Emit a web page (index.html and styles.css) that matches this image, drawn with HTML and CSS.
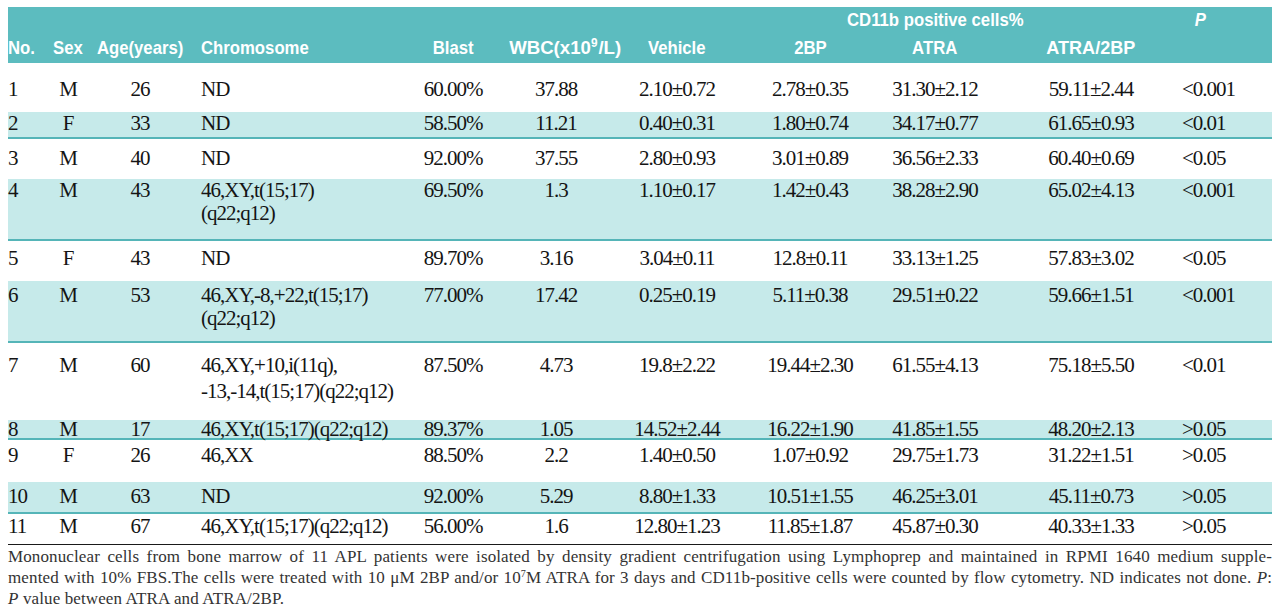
FILE: index.html
```html
<!DOCTYPE html>
<html lang="en">
<head>
<meta charset="utf-8">
<title>CD11b positive cells table</title>
<link rel="stylesheet" href="styles.css">
</head>
<body>
<div class="wrap">
<table class="data">
  <colgroup>
    <col class="w-no"><col class="w-sex"><col class="w-age"><col class="w-chr"><col class="w-blast"><col class="w-wbc"><col class="w-veh"><col class="w-bp"><col class="w-atra"><col class="w-atrabp"><col class="w-p">
  </colgroup>
  <thead>
    <tr class="hrow1">
      <th colspan="8"></th>
      <th class="c"><span class="group"><span class="hx">CD11b positive cells%</span></span></th>
      <th></th>
      <th class="c pcol"><span class="hx"><i>P</i></span></th>
    </tr>
    <tr class="hrow2">
      <th class="l"><span class="hx hl">No.</span></th>
      <th class="c"><span class="hx">Sex</span></th>
      <th class="c"><span class="hx">Age(years)</span></th>
      <th class="l chr"><span class="hx hl">Chromosome</span></th>
      <th class="c"><span class="hx">Blast</span></th>
      <th class="c"><span class="hx hx-wide">WBC(x10<sup>9</sup>/L)</span></th>
      <th class="c"><span class="hx">Vehicle</span></th>
      <th class="c"><span class="hx">2BP</span></th>
      <th class="c"><span class="hx">ATRA</span></th>
      <th class="c"><span class="hx hx-mid">ATRA/2BP</span></th>
      <th class="c pcol"></th>
    </tr>
  </thead>
  <tbody>
    <tr class="r1"><td>1</td><td class="c">M</td><td class="c">26</td><td class="chr">ND</td><td class="c">60.00%</td><td class="c">37.88</td><td class="c">2.10±0.72</td><td class="c">2.78±0.35</td><td class="c">31.30±2.12</td><td class="c">59.11±2.44</td><td class="c pcol">&lt;0.001</td></tr>
    <tr class="band r2"><td>2</td><td class="c">F</td><td class="c">33</td><td class="chr">ND</td><td class="c">58.50%</td><td class="c">11.21</td><td class="c">0.40±0.31</td><td class="c">1.80±0.74</td><td class="c">34.17±0.77</td><td class="c">61.65±0.93</td><td class="c pcol">&lt;0.01</td></tr>
    <tr class="r3"><td>3</td><td class="c">M</td><td class="c">40</td><td class="chr">ND</td><td class="c">92.00%</td><td class="c">37.55</td><td class="c">2.80±0.93</td><td class="c">3.01±0.89</td><td class="c">36.56±2.33</td><td class="c">60.40±0.69</td><td class="c pcol">&lt;0.05</td></tr>
    <tr class="band r4"><td>4</td><td class="c">M</td><td class="c">43</td><td class="chr">46,XY,t(15;17)<br>(q22;q12)</td><td class="c">69.50%</td><td class="c">1.3</td><td class="c">1.10±0.17</td><td class="c">1.42±0.43</td><td class="c">38.28±2.90</td><td class="c">65.02±4.13</td><td class="c pcol">&lt;0.001</td></tr>
    <tr class="r5"><td>5</td><td class="c">F</td><td class="c">43</td><td class="chr">ND</td><td class="c">89.70%</td><td class="c">3.16</td><td class="c">3.04±0.11</td><td class="c">12.8±0.11</td><td class="c">33.13±1.25</td><td class="c">57.83±3.02</td><td class="c pcol">&lt;0.05</td></tr>
    <tr class="band r6"><td>6</td><td class="c">M</td><td class="c">53</td><td class="chr">46,XY,-8,+22,t(15;17)<br>(q22;q12)</td><td class="c">77.00%</td><td class="c">17.42</td><td class="c">0.25±0.19</td><td class="c">5.11±0.38</td><td class="c">29.51±0.22</td><td class="c">59.66±1.51</td><td class="c pcol">&lt;0.001</td></tr>
    <tr class="r7"><td>7</td><td class="c">M</td><td class="c">60</td><td class="chr">46,XY,+10,i(11q),<br>-13,-14,t(15;17)(q22;q12)</td><td class="c">87.50%</td><td class="c">4.73</td><td class="c">19.8±2.22</td><td class="c">19.44±2.30</td><td class="c">61.55±4.13</td><td class="c">75.18±5.50</td><td class="c pcol">&lt;0.01</td></tr>
    <tr class="band r8"><td>8</td><td class="c">M</td><td class="c">17</td><td class="chr">46,XY,t(15;17)(q22;q12)</td><td class="c">89.37%</td><td class="c">1.05</td><td class="c">14.52±2.44</td><td class="c">16.22±1.90</td><td class="c">41.85±1.55</td><td class="c">48.20±2.13</td><td class="c pcol">&gt;0.05</td></tr>
    <tr class="r9"><td>9</td><td class="c">F</td><td class="c">26</td><td class="chr">46,XX</td><td class="c">88.50%</td><td class="c">2.2</td><td class="c">1.40±0.50</td><td class="c">1.07±0.92</td><td class="c">29.75±1.73</td><td class="c">31.22±1.51</td><td class="c pcol">&gt;0.05</td></tr>
    <tr class="band r10"><td>10</td><td class="c">M</td><td class="c">63</td><td class="chr">ND</td><td class="c">92.00%</td><td class="c">5.29</td><td class="c">8.80±1.33</td><td class="c">10.51±1.55</td><td class="c">46.25±3.01</td><td class="c">45.11±0.73</td><td class="c pcol">&gt;0.05</td></tr>
    <tr class="r11 last"><td>11</td><td class="c">M</td><td class="c">67</td><td class="chr">46,XY,t(15;17)(q22;q12)</td><td class="c">56.00%</td><td class="c">1.6</td><td class="c">12.80±1.23</td><td class="c">11.85±1.87</td><td class="c">45.87±0.30</td><td class="c">40.33±1.33</td><td class="c pcol">&gt;0.05</td></tr>
  </tbody>
</table>
<div class="note">
  <div class="just">Mononuclear cells from bone marrow of 11 APL patients were isolated by density gradient centrifugation using Lymphoprep and maintained in RPMI 1640 medium supple-</div>
  <div class="just">mented with 10% FBS.The cells were treated with 10 μM 2BP and/or 10<sup>7</sup>M ATRA for 3 days and CD11b-positive cells were counted by flow cytometry. ND indicates not done. <i>P</i>:</div>
  <div><i>P</i> value between ATRA and ATRA/2BP.</div>
</div>
</div>
</body>
</html>
```

FILE: styles.css
```css
html, body {
  margin: 0;
  padding: 0;
  background: #ffffff;
}

.wrap {
  padding: 7px 8px 0 8px;
}

table.data {
  width: 1264px;
  border-collapse: collapse;
  table-layout: fixed;
  font-family: "Liberation Serif", "Times New Roman", serif;
  color: #141414;
}

.w-no { width: 40px; }
.w-sex { width: 40px; }
.w-age { width: 104px; }
.w-chr { width: 206px; }
.w-blast { width: 110px; }
.w-wbc { width: 96px; }
.w-veh { width: 146px; }
.w-bp { width: 120px; }
.w-atra { width: 130px; }
.w-atrabp { width: 182px; }
.w-p { width: 90px; }

thead th {
  background: #5cbcbf;
  color: #ffffff;
  font-family: "Liberation Sans", Arial, sans-serif;
  font-weight: bold;
  font-size: 19px;
  padding: 0;
  white-space: nowrap;
  vertical-align: middle;
}

.hx {
  display: inline-block;
  transform: scaleX(0.88);
  transform-origin: center;
}

.hx.hl {
  transform-origin: left center;
}

.hx.hx-wide {
  transform: scaleX(0.98);
}

.hx.hx-mid {
  transform: scaleX(0.95);
}

thead sup {
  font-size: 12px;
  line-height: 0;
  vertical-align: 7px;
  margin-right: 1px;
}

.hrow1 { height: 26px; }
.hrow2 { height: 30px; }

.group {
  display: block;
  margin: 0 -70px;
  text-align: center;
}

th.l, td { text-align: left; }
th.c, td.c { text-align: center; }
th.chr { padding-left: 9px; }
th.pcol { padding-right: 54px; }

tbody td {
  font-size: 21px;
  letter-spacing: -1px;
  line-height: 23px;
  padding: 0;
  vertical-align: top;
  white-space: nowrap;
}

tbody td.chr { padding-left: 9px; }
tbody td.pcol { padding-right: 54px; }

tr.band td {
  background: #c6eaea;
  border-bottom: 2px solid #55b5b8;
}

tr.last td {
  border-bottom: 1px solid #1a1a1a;
}

.r1 { height: 49px; }
.r1 td { padding-top: 15px; }
.r2 { height: 26px; }
.r3 { height: 41px; }
.r3 td { padding-top: 8px; }
.r4 { height: 61px; }
.r5 { height: 41px; }
.r5 td { padding-top: 6px; }
.r6 { height: 61px; }
.r6 td { padding-top: 3px; }
.r7 { height: 78px; }
.r7 td { padding-top: 9px; line-height: 26px; }
.r8 td { line-height: 18px; }
.r9 { height: 43px; }
.r9 td { padding-top: 4px; }
.r10 { height: 31px; }
.r10 td { padding-top: 3px; }
.r11 { height: 31px; }
.r11 td { padding-top: 1px; }

.note {
  margin-top: 1px;
  font-family: "Liberation Serif", "Times New Roman", serif;
  font-size: 17px;
  letter-spacing: 0.12px;
  line-height: 21px;
  color: #333333;
  white-space: nowrap;
}

.note .just {
  text-align: justify;
  text-align-last: justify;
}

.note sup {
  font-size: 10px;
  line-height: 0;
  vertical-align: 6px;
}
```
